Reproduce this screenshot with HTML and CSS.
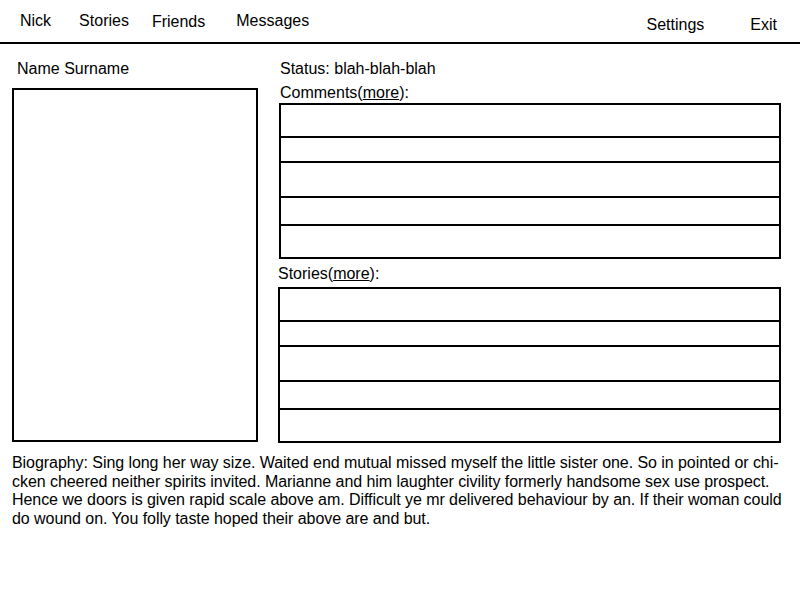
FILE: index.html
```html
<!DOCTYPE html>
<html>
<head>
<meta charset="utf-8">
<link rel="stylesheet" href="styles.css">
</head>
<body>
<header class="topbar">
  <nav class="nav-left">
    <a class="nav-item nick">Nick</a>
    <a class="nav-item stories">Stories</a>
    <a class="nav-item friends">Friends</a>
    <a class="nav-item messages">Messages</a>
  </nav>
  <nav class="nav-right">
    <a class="nav-item settings">Settings</a>
    <a class="nav-item exit">Exit</a>
  </nav>
</header>
<main class="profile">
  <section class="left-col">
    <div class="name">Name Surname</div>
    <div class="photo"></div>
  </section>
  <section class="right-col">
    <div class="status">Status: blah-blah-blah</div>
    <div class="label comments-label">Comments(<u>more</u>):</div>
    <div class="list comments-list">
      <div class="row r1"></div>
      <div class="row r2"></div>
      <div class="row r3"></div>
      <div class="row r4"></div>
      <div class="row r5"></div>
    </div>
    <div class="label stories-label">Stories(<u>more</u>):</div>
    <div class="list stories-list">
      <div class="row r1"></div>
      <div class="row r2"></div>
      <div class="row r3"></div>
      <div class="row r4"></div>
      <div class="row r5"></div>
    </div>
  </section>
</main>
<p class="bio">Biography: Sing long her way size. Waited end mutual missed myself the little sister one. So in pointed or chi&shy;cken cheered neither spirits invited. Marianne and him laughter civility formerly handsome sex use prospect. Hence we doors is given rapid scale above am. Difficult ye mr delivered behaviour by an. If their woman could do wound on. You folly taste hoped their above are and but.</p>
</body>
</html>
```
FILE: styles.css
```css
html, body {
  margin: 0;
  padding: 0;
  background: #fff;
  color: #000;
  font-family: "Liberation Sans", Arial, sans-serif;
  font-size: 16px;
}

.topbar {
  display: flex;
  justify-content: space-between;
  height: 42px;
  border-bottom: 2px solid #000;
}

.nav-left, .nav-right {
  display: flex;
  align-items: flex-start;
}

.nav-item {
  line-height: 18px;
  color: #000;
}

.nick { margin: 12px 0 0 20px; }
.stories { margin: 12px 0 0 28px; }
.friends { margin: 13px 0 0 23px; }
.messages { margin: 12px 0 0 31px; }
.settings { margin: 16px 0 0 0; }
.exit { margin: 16px 23px 0 46px; }

.profile {
  display: flex;
  align-items: flex-start;
}

.left-col {
  width: 246px;
  margin-left: 12px;
}

.name {
  margin: 16px 0 0 5px;
  line-height: 18px;
}

.photo {
  margin-top: 10px;
  height: 350px;
  border: 2px solid #000;
}

.right-col {
  width: 502px;
  margin-left: 21px;
}

.status {
  margin-top: 16px;
  line-height: 18px;
  padding-left: 1px;
}

.label {
  line-height: 18px;
}

.comments-label {
  margin-top: 6px;
  padding-left: 1px;
}

.comments-list {
  margin-top: 1px;
}

.stories-label {
  margin-top: 6px;
  margin-left: -1px;
}

.stories-list {
  margin-top: 4px;
  margin-left: -1px;
}

.list {
  border: 2px solid #000;
}

.row {
  border-bottom: 2px solid #000;
}

.row.r5 { border-bottom: 0; }
.r1 { height: 31px; }
.r2 { height: 23px; }
.r3 { height: 33px; }
.r4 { height: 26px; }
.r5 { height: 31px; }

.bio {
  margin: 11px 12px 0 12px;
  line-height: 18.5px;
  letter-spacing: -0.06px;
  hyphens: manual;
}
```
